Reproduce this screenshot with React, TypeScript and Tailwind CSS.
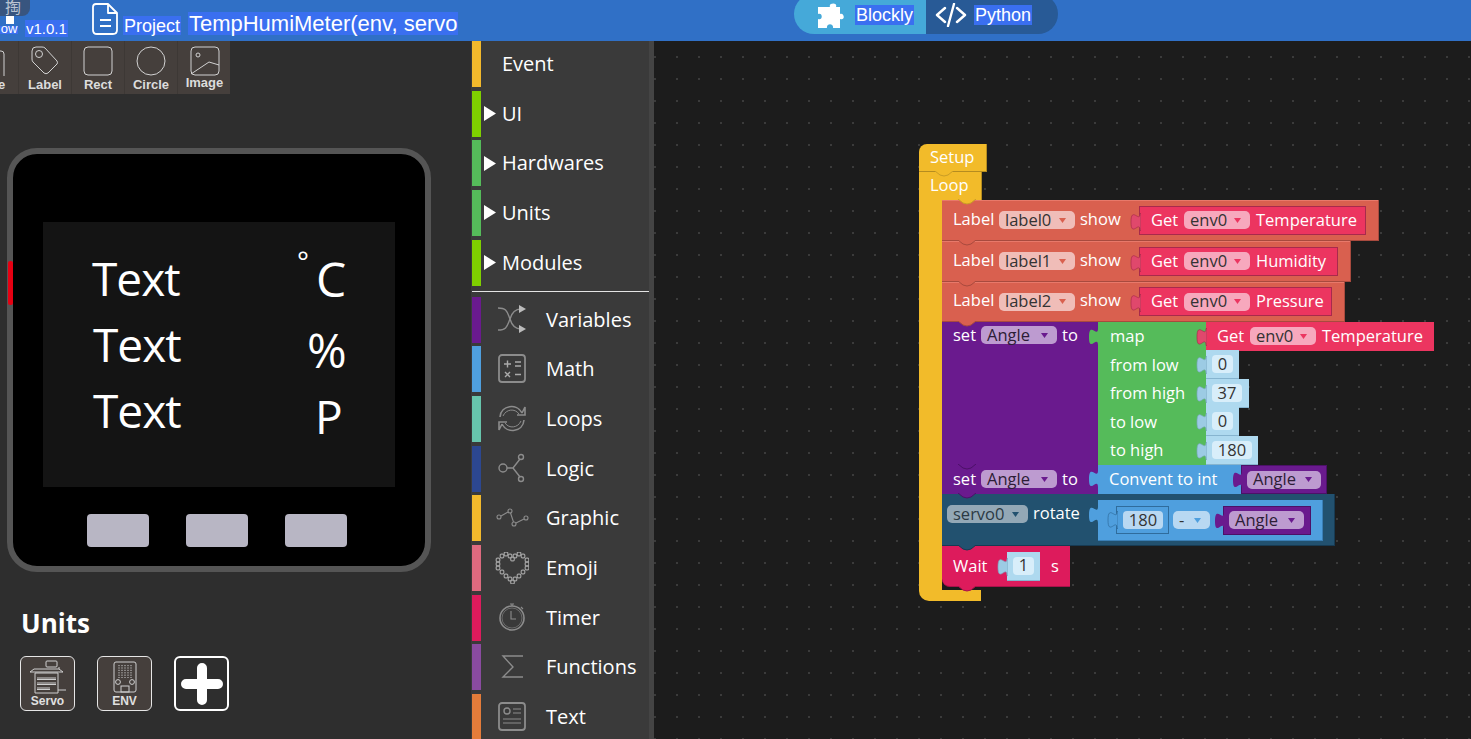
import React from "react";

const Tab = ({ color, stroke, top = 5 }: { color: string; stroke?: string; top?: number }) => (
  <svg width="11" height="18" viewBox="0 0 11 18" className="absolute -left-[10px]" style={{ top }}>
    <path d="M11 0.5 L10 0.5 c0,10 -9,-8 -9,8.5 s9,-2.5 9,8.5 L11 17.5 z" fill={color} stroke={stroke ?? "none"} strokeWidth="0.7" />
  </svg>
);

const Bump = ({ color, edge, left = 16, below }: { color: string; edge: string; left?: number; below?: boolean }) => (
  <svg width="18" height="6" viewBox="0 0 18 6" className={`absolute z-10 ${below ? "top-full" : "-top-[1px]"}`} style={{ left }}>
    <path d="M0 0 L5 4 Q9 6 13 4 L18 0 z" fill={color} />
    <path d="M0 0 L5 4 Q9 6 13 4 L18 0" fill="none" stroke={edge} strokeWidth="1" />
  </svg>
);

const Field = ({ text, w, bg, arrow, color = "#333" }: { text: string; w: number; bg: string; arrow: string; color?: string }) => (
  <span className="flex h-[18px] shrink-0 items-center justify-between rounded-[5px] pl-[6px] pr-[9px] text-[16.5px] leading-none" style={{ width: w, background: bg, color }}>
    <span>{text}</span>
    <svg width="7" height="5" viewBox="0 0 7 5"><path d="M0 0 L7 0 L3.5 5 z" fill={arrow} /></svg>
  </span>
);

const GetBlock = ({ w, prop, framed = true }: { w: number; prop: string; framed?: boolean }) => (
  <div className={`relative flex h-[29px] shrink-0 items-center bg-[#ec3560] pl-[11px] ${framed ? "border border-[#a82a4c]" : ""}`} style={{ width: w }}>
    <Tab color="#e0486c" stroke="#a82a4c" top={6} />
    <span className="w-[33px] text-white">Get</span>
    <Field text="env0" w={66} bg="#f7a8bd" arrow="#ec3560" />
    <span className="ml-[6px] whitespace-nowrap text-white">{prop}</span>
  </div>
);

const LabelRow = ({ name, w, h, gw, prop, first }: { name: string; w: number; h: number; gw: number; prop: string; first?: boolean }) => (
  <div className="relative flex items-center border-b border-r border-[#a84a3e] bg-[#d9604f] pl-[11px] shadow-[inset_0_1px_0_#e8796a]" style={{ width: w, height: h }}>
    {first ? <Bump color="#f2bb2a" edge="#c99d26" /> : <Bump color="#d9604f" edge="#a84a3e" />}
    <span className="-mt-[2px] w-[46px] text-white">Label</span>
    <Field text={name} w={76} bg="#f0bdb8" arrow="#d9604f" />
    <span className="-mt-[2px] ml-[5px] w-[49px] text-white">show</span>
    <div className="ml-[10px]">
      <GetBlock w={gw} prop={prop} />
    </div>
  </div>
);

const NumBlock = ({ v, w, fw }: { v: string; w: number; fw: number }) => (
  <div className="relative flex h-[29px] shrink-0 items-center border-b border-[#86b4cf] bg-[#aed9ef] pl-[6px]" style={{ width: w }}>
    <Tab color="#9ccbe4" stroke="#7ba7c0" top={6} />
    <span className="flex h-[18px] items-center justify-center rounded-[4px] bg-[#d8eefa] text-[16.5px] leading-none text-[#333]" style={{ width: fw }}>{v}</span>
  </div>
);

const AngleBlock = ({ w, fw }: { w: number; fw: number }) => (
  <div className="relative flex h-[29px] shrink-0 items-center border border-[#4c1168] bg-[#6a1a8e] pl-[5px]" style={{ width: w }}>
    <Tab color="#6a1a8e" top={5} />
    <Field text="Angle" w={fw} bg="#bd9bd0" arrow="#6a1a8e" color="#2d1d36" />
  </div>
);

const SetHead = () => (
  <>
    <span className="w-[28px] text-white">set</span>
    <Field text="Angle" w={76} bg="#bd9bd0" arrow="#6a1a8e" color="#2d1d36" />
    <span className="ml-[5px] text-white">to</span>
  </>
);

const MapRow = ({ label, children }: { label: string; children: React.ReactNode }) => (
  <div className="flex h-[28.5px] items-center">
    <span className="w-[108px] shrink-0 pl-[12px] text-white">{label}</span>
    {children}
  </div>
);

const blocks = (
  <div className="absolute left-[265px] top-[103px] flex w-[520px] flex-col font-['Open_Sans',sans-serif] text-[16.5px] leading-none">
    <div className="flex h-[28px] w-[68px] items-center rounded-tl-[8px] border-b border-r border-[#b58c20] bg-[#f2bb2a] pl-[11px] text-white">Setup</div>
    <div className="relative flex h-[28px] w-[63px] items-center border-r border-[#b58c20] bg-[#f2bb2a] pb-[2px] pl-[11px] text-white">
      <Bump color="#f2bb2a" edge="#c99d26" />
      Loop
    </div>
    <div className="flex">
      <div className="w-[23px] shrink-0 bg-[#f2bb2a]" />
      <div className="flex flex-col pb-[3px]">
        <LabelRow name="label0" w={437} h={41} gw={227} prop="Temperature" first />
        <LabelRow name="label1" w={409} h={41} gw={199} prop="Humidity" />
        <LabelRow name="label2" w={403} h={40} gw={193} prop="Pressure" />

        <div className="flex">
          <div className="relative flex h-[143px] w-[156px] shrink-0 items-start bg-[#6a1a8e] pl-[11px] pt-[4px]">
            <Bump color="#d9604f" edge="#a84a3e" />
            <div className="flex h-[18px] items-center"><SetHead /></div>
          </div>
          <div className="relative flex flex-col bg-[#55bb5a]" style={{ width: 108, height: 143 }}>
            <Tab color="#55bb5a" top={6} />
            <div className="w-[340px]">
              <MapRow label="map"><GetBlock w={228} prop="Temperature" framed={false} /></MapRow>
              <MapRow label="from low"><NumBlock v="0" w={33} fw={21} /></MapRow>
              <MapRow label="from high"><NumBlock v="37" w={43} fw={30} /></MapRow>
              <MapRow label="to low"><NumBlock v="0" w={33} fw={21} /></MapRow>
              <MapRow label="to high"><NumBlock v="180" w={52} fw={40} /></MapRow>
            </div>
          </div>
        </div>

        <div className="flex h-[29px]">
          <div className="relative flex w-[156px] shrink-0 items-center bg-[#6a1a8e] pb-[1px] pl-[11px]">
            <Bump color="#6a1a8e" edge="#4c1168" />
            <SetHead />
          </div>
          <div className="relative flex w-[143px] shrink-0 items-center bg-[#4f9fde] pb-[1px] pl-[11px] text-white">
            <Tab color="#4f9fde" top={5} />
            <span className="whitespace-nowrap">Convent to int</span>
          </div>
          <AngleBlock w={86} fw={74} />
        </div>

        <div className="relative flex h-[52px] w-[393px] items-start border-b border-r border-[#173a52] bg-[#22516f] pl-[5px] pt-[6px]">
          <Bump color="#6a1a8e" edge="#4c1168" />
          <div className="mt-[5px]"><Field text="servo0" w={81} bg="#93a8b6" arrow="#22516f" color="#2b3a44" /></div>
          <span className="ml-[5px] mt-[5px] w-[65px] text-white">rotate</span>
          <div className="relative flex h-[41px] w-[225px] shrink-0 items-center border-b border-r border-[#3a7fb6] bg-[#4f9fde] pl-[18px]">
            <Tab color="#4f9fde" top={6} />
            <div className="relative flex h-[28px] w-[53px] shrink-0 items-center border border-[#2f6c9c] bg-[#4f9fde] pl-[6px]">
              <Tab color="#4f9fde" stroke="#2f6c9c" top={4} />
              <span className="flex h-[18px] w-[40px] items-center justify-center rounded-[4px] bg-[#b8d8f2] text-[#333]">180</span>
            </div>
            <div className="ml-[4px]"><Field text="-" w={37} bg="#b8d8f2" arrow="#4f9fde" /></div>
            <div className="ml-[13px]"><AngleBlock w={88} fw={75} /></div>
          </div>
        </div>

        <div className="relative flex h-[41px] w-[128px] items-center rounded-bl-[8px] border-b border-[#a8134a] bg-[#dd1b5c] pl-[11px] text-white">
          <Bump color="#22516f" edge="#173a52" />
          <Bump color="#dd1b5c" edge="#a8134a" below />
          <span className="w-[54px]">Wait</span>
          <div className="relative flex h-[29px] w-[33px] shrink-0 items-center border-b border-[#86b4cf] bg-[#aed9ef] pl-[6px]">
            <Tab color="#9ccbe4" stroke="#7ba7c0" top={6} />
            <span className="flex h-[18px] w-[21px] items-center justify-center rounded-[4px] bg-[#d8eefa] text-[#333]">1</span>
          </div>
          <span className="ml-[11px]">s</span>
        </div>
      </div>
    </div>
    <div className="h-[11px] w-[62px] rounded-bl-[10px] bg-[#f2bb2a]" />
  </div>
);

const ic = { fill: "none", stroke: "#8c8c8c", strokeWidth: 1.4 };

const icons: Record<string, React.ReactNode> = {
  Variables: (
    <g {...ic}>
      <path d="M3 4 C12 4 12 8 15 15 C17 22 20 25 26 25" />
      <path d="M3 26 C12 26 12 22 15 15 C17 8 20 5 26 5" />
      <path d="M24 1 L31 5 L24 9 z" fill="#bbb" stroke="none" />
      <path d="M24 21 L31 25 L24 29 z" fill="#bbb" stroke="none" />
    </g>
  ),
  Math: (
    <g {...ic}>
      <rect x="4" y="2" width="26" height="27" rx="3" strokeWidth="1.8" />
      <path d="M9 11 H16 M12.5 7.5 V14.5 M20 9 H26 M20 13 H26 M10 19 L15 24 M15 19 L10 24 M20 21.5 H26" stroke="#aaa" />
    </g>
  ),
  Loops: (
    <g {...ic} strokeWidth="1.6">
      <path d="M5 14 C6 2 22 0 27 10 M27 10 L30 4 L30 12 L22 12" />
      <path d="M29 17 C28 29 12 31 7 21 M7 21 L4 27 L4 19 L12 19" />
      <path d="M8 13 C11 6 20 5 24 11 M26 18 C23 25 14 26 10 20" strokeWidth="1" />
    </g>
  ),
  Logic: (
    <g {...ic}>
      <circle cx="8" cy="15" r="4" />
      <circle cx="26" cy="4" r="2.5" />
      <circle cx="26" cy="26" r="2.5" />
      <path d="M12 15 H18 L25 6 M18 15 L25 24" />
    </g>
  ),
  Graphic: (
    <g {...ic} strokeWidth="1.1">
      <circle cx="4" cy="15" r="2" />
      <circle cx="15" cy="9" r="2" />
      <circle cx="19" cy="22" r="2" />
      <circle cx="31" cy="16" r="2" />
      <path d="M6 14 L13 10 M15.5 11 L18.5 20 M21 21 L29 17" />
    </g>
  ),
  Emoji: (
    <g {...ic} strokeWidth="1.2" stroke="#a0a0a0">
      {[
        [7, 4], [11, 2], [15, 4], [20, 4], [24, 2], [28, 4], [3, 8], [17.5, 7], [32, 8], [3, 12], [32, 12], [3, 16], [32, 16],
        [7, 20], [28, 20], [11, 24], [24, 24], [15, 27], [20, 27], [17.5, 30],
      ].map(([x, y], i) => (
        <rect key={i} x={x - 1.8} y={y - 1.8} width="3.6" height="3.6" rx="1" />
      ))}
    </g>
  ),
  Timer: (
    <g {...ic}>
      <circle cx="17" cy="16" r="12" strokeWidth="1.6" />
      <circle cx="17" cy="16" r="10" strokeWidth="0.6" />
      <path d="M17 2 V4 M15 2 H19 M26 5 L28 7 M16 9 V17 H21" strokeWidth="1.1" />
    </g>
  ),
  Functions: <path d="M28 5 H8 L18 16 L8 26 H28" fill="none" stroke="#8c8c8c" strokeWidth="1.4" />,
  Text: (
    <g {...ic}>
      <rect x="4" y="2" width="26" height="27" rx="3" strokeWidth="1.8" />
      <circle cx="12" cy="10" r="3" />
      <path d="M18 8 H26 M18 12 H26 M8 18 H26 M8 22 H26" strokeWidth="1.2" />
    </g>
  ),
};

const Chevron = () => (
  <svg width="12" height="15" viewBox="0 0 12 15" className="ml-[3px] shrink-0"><path d="M0 0 L12 7.5 L0 15 z" fill="#fff" /></svg>
);

const TopItem = ({ color, label, arrow = true }: { color: string; label: string; arrow?: boolean }) => (
  <div className="flex h-[46px] shrink-0 items-center">
    <div className="h-full w-[9px] shrink-0" style={{ background: color }} />
    <div className="w-[15px] shrink-0">{arrow && <Chevron />}</div>
    <span className="ml-[6px] text-[20px] text-white">{label}</span>
  </div>
);

const IconItem = ({ color, label }: { color: string; label: string }) => (
  <div className="flex h-[46px] shrink-0 items-center">
    <div className="h-full w-[9px] shrink-0" style={{ background: color }} />
    <svg width="34" height="32" viewBox="0 0 34 32" className="ml-[14px] shrink-0">{icons[label]}</svg>
    <span className="ml-[17px] text-[20px] text-white">{label}</span>
  </div>
);

const Tool = ({ label, children, cut }: { label: string; children: React.ReactNode; cut?: boolean }) => (
  <div className={`flex h-[53px] w-[53px] shrink-0 flex-col items-center border-r border-[#3d3835] pt-[5px] ${cut ? "-ml-[34px]" : ""}`}>
    <svg width="32" height="30" viewBox="0 0 32 30" fill="none" stroke="#d2d2d2" strokeWidth="1">{children}</svg>
    <span className="mt-[2px] font-['Liberation_Sans',sans-serif] text-[13px] font-bold leading-[14px] text-[#dcdcdc]">{label}</span>
  </div>
);

export default function App() {
  return (
    <div className="flex h-[739px] w-[1471px] flex-col overflow-hidden bg-[#1c1c1c] font-['Open_Sans',sans-serif]">
      <header className="relative flex h-[41px] shrink-0 items-start overflow-hidden bg-[#3070c6] font-['Liberation_Sans',sans-serif] text-white">
        <div className="absolute left-0 top-0 h-[16px] w-[30px] overflow-hidden rounded-br-[8px] bg-[#38557f] pl-[5px] font-['Noto_Sans_CJK_SC',sans-serif] text-[16px] leading-[12px] text-[#b9c3d2]">掏</div>
        <div className="relative flex w-[25px] shrink-0 flex-col items-center pt-[16px]">
          <div className="ml-[-5px] h-[8px] w-[8px] bg-white" />
          <span className="ml-[-7px] mt-[2px] h-[8px] overflow-hidden bg-[#3a6ff0] px-[1px] text-[13px] leading-[6px]">ow</span>
        </div>
        <span className="mt-[20px] h-[17px] bg-[#3a6ff0] px-[1px] text-[15px] leading-[18px]">v1.0.1</span>
        <svg width="26" height="32" viewBox="0 0 26 32" className="ml-[24px] mt-[3px] shrink-0" fill="none" stroke="#fff" strokeWidth="1.8">
          <path d="M4 1 H16 L25 10 V27 Q25 31 21 31 H5 Q1 31 1 27 V4 Q1 1 4 1 z M16 1 V10 H25 M8 17 H19 M8 23 H19" strokeLinejoin="round" />
        </svg>
        <span className="ml-[5px] mt-[16px] h-[19px] bg-[#3a6ff0] px-[1px] text-[18px] leading-[20px]">Project</span>
        <span className="ml-[7px] mt-[12px] h-[23px] bg-[#3a6ff0] px-[1px] text-[22px] leading-[23px] whitespace-nowrap">TempHumiMeter(env, servo</span>
        <div className="absolute left-[794px] top-[-6px] flex h-[40px] w-[264px] overflow-hidden rounded-[20px] text-[18px]">
          <div className="flex w-[132px] items-center bg-[#45a9d9] pl-[22px] pt-[1px]">
            <svg width="30" height="28" viewBox="0 0 30 28" className="mt-[5px] shrink-0">
              <path d="M10 4 H14 C12 0 22 -1 20 4 H24 V11 C28 9 30 18 24 16 V25 H17 C18 20 10 20 11 25 H2 V16 C7 18 7 9 2 11 V4 z" fill="#fff" />
            </svg>
            <span className="ml-[9px] h-[20px] bg-[#3a6ff0] px-[1px] leading-[20px]">Blockly</span>
          </div>
          <div className="flex flex-1 items-center bg-[#285a96] pl-[9px] pt-[1px]">
            <svg width="32" height="24" viewBox="0 0 32 24" className="shrink-0" fill="none" stroke="#fff" strokeWidth="2.4" strokeLinecap="round" strokeLinejoin="round">
              <path d="M10 5 L2 12 L10 19 M22 5 L30 12 L22 19 M19 1 L13 23" />
            </svg>
            <span className="ml-[7px] h-[20px] bg-[#3a6ff0] px-[1px] leading-[20px]">Python</span>
          </div>
        </div>
      </header>

      <div className="flex min-h-0 flex-1">
        <aside className="flex w-[471px] shrink-0 flex-col overflow-hidden bg-[#2e2e2e]">
          <div className="flex h-[53px] w-[230px] shrink-0 bg-[#453f3c]">
            <Tool label="Title" cut>
              <rect x="4" y="5" width="24" height="28" rx="3" />
              <circle cx="16" cy="10" r="2" />
            </Tool>
            <Tool label="Label">
              <path d="M3 5 Q3 1 7 1 H13 Q15 1 16 2 L28 15 Q29 17 28 18 L19 27 Q17 28.5 15 27 L4 16 Q3 15 3 13 z" />
              <circle cx="10" cy="8" r="3.5" />
            </Tool>
            <Tool label="Rect"><rect x="2" y="1" width="28" height="28" rx="4" /></Tool>
            <Tool label="Circle"><circle cx="16" cy="15" r="14" /></Tool>
            <div className="flex h-[53px] w-[53px] shrink-0 flex-col items-center pt-[5px]">
              <svg width="32" height="30" viewBox="0 0 32 30" fill="none" stroke="#d2d2d2" strokeWidth="1">
                <rect x="2" y="1" width="28" height="28" rx="4" />
                <circle cx="9" cy="9" r="2" />
                <path d="M2 28 L20 16 L30 19" />
              </svg>
              <span className="font-['Liberation_Sans',sans-serif] text-[13px] font-bold leading-[14px] text-[#dcdcdc]">Image</span>
            </div>
          </div>

          <div className="relative ml-[7px] mt-[54px] h-[424px] w-[424px] shrink-0 rounded-[30px] border-[6px] border-[#555555] bg-black">
            <div className="absolute left-[-5px] top-[107px] h-[44px] w-[5px] rounded-[2px] bg-[#e60012]" />
            <div className="absolute left-[30px] top-[68px] h-[265px] w-[352px] bg-[#141414] text-[46px] leading-none tracking-[-1px] text-white">
              <span className="absolute left-[49px] top-[33px]">Text</span>
              <span className="absolute left-[50px] top-[99px]">Text</span>
              <span className="absolute left-[50px] top-[165px]">Text</span>
              <span className="absolute left-[254px] top-[25px] text-[28px]">°</span>
              <span className="absolute left-[273px] top-[33px] text-[48px]">C</span>
              <span className="absolute left-[264px] top-[104px] text-[48px]">%</span>
              <span className="absolute left-[272px] top-[171px]">P</span>
            </div>
            <div className="absolute left-[74px] top-[360px] flex gap-[37px]">
              <div className="h-[33px] w-[62px] rounded-[4px] bg-[#b8b6c4]" />
              <div className="h-[33px] w-[62px] rounded-[4px] bg-[#b8b6c4]" />
              <div className="h-[33px] w-[62px] rounded-[4px] bg-[#b8b6c4]" />
            </div>
          </div>

          <h2 className="ml-[21px] mt-[33px] text-[26px] font-bold leading-[36px] text-white">Units</h2>
          <div className="ml-[20px] mt-[15px] flex gap-[22px]">
            <div className="flex h-[55px] w-[55px] flex-col items-center rounded-[6px] border-[1.5px] border-[#e6e6e6] bg-[#453f3c] pt-[3px]">
              <svg width="40" height="35" viewBox="0 0 40 35" fill="none" stroke="#cfcfcf" strokeWidth="1">
                <rect x="18" y="1" width="11" height="6" rx="1" />
                <path d="M6 9 H31 V7 M2 12 H35 M2 12 L6 9 M35 12 L31 9 M7 13 H30 V33 H7 z M9 18 H28 M9 19.5 H28 M9 23 H28 M9 24.5 H28 M9 28 H22 M9 29.5 H22 M30 30 H38" />
              </svg>
              <span className="font-['Liberation_Sans',sans-serif] text-[12px] font-bold leading-[12px] text-[#e0e0e0]">Servo</span>
            </div>
            <div className="flex h-[55px] w-[55px] flex-col items-center rounded-[6px] border-[1.5px] border-[#e6e6e6] bg-[#453f3c] pt-[4px]">
              <svg width="26" height="34" viewBox="0 0 26 34" fill="none" stroke="#cfcfcf" strokeWidth="1">
                <rect x="2" y="1" width="22" height="30" rx="2" />
                <path d="M7 4 V17 M10 4 V17 M13 4 V17 M16 4 V17 M19 4 V17" strokeDasharray="1.2 1.2" />
                <circle cx="6" cy="21" r="2.4" />
                <circle cx="20" cy="21" r="2.4" />
                <rect x="9" y="25" width="8" height="6" />
              </svg>
              <span className="font-['Liberation_Sans',sans-serif] text-[12px] font-bold leading-[12px] text-[#e0e0e0]">ENV</span>
            </div>
            <div className="flex h-[55px] w-[55px] items-center justify-center rounded-[6px] border-[2px] border-white">
              <svg width="42" height="42" viewBox="0 0 42 42" className="blur-[0.6px]">
                <path d="M21 5 V37 M5 21 H37" stroke="#fff" strokeWidth="10" strokeLinecap="round" />
              </svg>
            </div>
          </div>
        </aside>

        <nav className="flex w-[183px] shrink-0 border-r-[5px] border-[#444444] bg-[#3a3a3a] pl-[1px]">
          <div className="flex w-full flex-col gap-[3.65px] overflow-hidden">
            <TopItem color="#f2b92c" label="Event" arrow={false} />
            <TopItem color="#7fd000" label="UI" />
            <TopItem color="#55bb5a" label="Hardwares" />
            <TopItem color="#55bb5a" label="Units" />
            <TopItem color="#7fd000" label="Modules" />
            <div className="mb-[1.5px] mt-[1.5px] h-[1px] shrink-0 bg-[#e4e4e4]" />
            <IconItem color="#6a1a8e" label="Variables" />
            <IconItem color="#4f9fde" label="Math" />
            <IconItem color="#67c5ac" label="Loops" />
            <IconItem color="#2c4790" label="Logic" />
            <IconItem color="#f2b92c" label="Graphic" />
            <IconItem color="#de6a7f" label="Emoji" />
            <IconItem color="#dd1b5c" label="Timer" />
            <IconItem color="#8a4ba0" label="Functions" />
            <IconItem color="#e47c3a" label="Text" />
          </div>
        </nav>

        <main className="relative min-w-0 flex-1 overflow-hidden bg-[#1c1c1c] bg-[radial-gradient(circle,#474747_0.6px,transparent_1px)] bg-[size:22px_22px] bg-[position:-10px_5px]">
          {blocks}
        </main>
      </div>
    </div>
  );
}
